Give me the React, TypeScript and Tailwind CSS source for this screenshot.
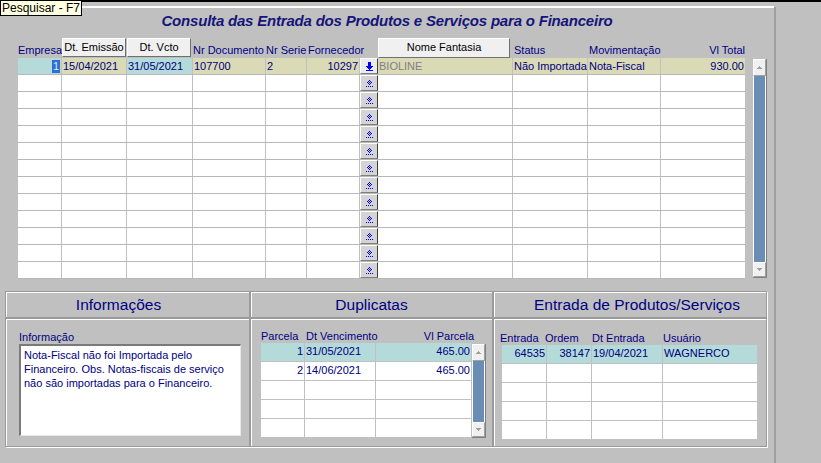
import React from "react";

const CYAN = "bg-[#b4dada]";
const BEIGE = "bg-[#dadab6]";
const TXT = "text-[#000080]";

type Col = { w: string; right?: boolean; btn?: boolean; bg?: string; val?: string; gray?: boolean };

const mainCols: Col[] = [
  { w: "w-[44px]", right: true, bg: CYAN, val: "1" },
  { w: "w-[65px]", bg: BEIGE, val: "15/04/2021" },
  { w: "w-[66px]", bg: CYAN, val: "31/05/2021" },
  { w: "w-[73px]", bg: BEIGE, val: "107700" },
  { w: "w-[41px]", bg: BEIGE, val: "2" },
  { w: "w-[53px]", right: true, bg: BEIGE, val: "10297" },
  { w: "w-[18px]", btn: true },
  { w: "w-[135px]", bg: BEIGE, val: "BIOLINE", gray: true },
  { w: "w-[75px]", bg: BEIGE, val: "Não Importada" },
  { w: "w-[73px]", bg: BEIGE, val: "Nota-Fiscal" },
  { w: "w-[84px]", right: true, bg: BEIGE, val: "930.00" },
];

function DiamondIcon() {
  const dots = [
    [3, 0], [2, 1], [4, 1], [1, 2], [3, 2], [5, 2], [2, 3], [4, 3], [3, 4],
    [0, 6], [2, 6], [4, 6], [6, 6],
  ];
  return (
    <svg width="7" height="7" viewBox="0 0 7 7" shapeRendering="crispEdges">
      {dots.map(([x, y], i) => (
        <rect key={i} x={x} y={y} width="1" height="1" fill="#0000ff" />
      ))}
    </svg>
  );
}

function DownArrowIcon() {
  return (
    <svg width="9" height="9" viewBox="0 0 9 9" shapeRendering="crispEdges">
      <rect x="3" y="0" width="3" height="4" fill="#0000ff" />
      <polygon points="0.5,4 8.5,4 4.5,8" fill="#0000ff" />
      <rect x="1" y="8" width="7" height="1" fill="#0000ff" />
    </svg>
  );
}

function ArrowTri({ up }: { up?: boolean }) {
  return (
    <svg width="5" height="3" viewBox="0 0 5 3" shapeRendering="crispEdges">
      <polygon points={up ? "0,3 5,3 2.5,0" : "0,0 5,0 2.5,3"} fill="#a0a0a0" />
    </svg>
  );
}

function ScrollBar({ h }: { h: string }) {
  return (
    <div className={`${h} w-[14px] flex flex-col border-r border-b border-[#808080]`}>
      <div className="h-[17px] bg-[#f0f0f0] border-t border-l border-white border-r border-b border-r-[#a0a0a0] border-b-[#a0a0a0] flex items-center justify-center">
        <ArrowTri up />
      </div>
      <div className="flex-1 bg-[#6a8db5] border-l border-r border-white" />
      <div className="h-[15px] bg-[#f0f0f0] border-t border-l border-white border-r border-b border-r-[#a0a0a0] border-b-[#a0a0a0] flex items-center justify-center">
        <ArrowTri />
      </div>
    </div>
  );
}

function HeadButton({ w, label }: { w: string; label: string }) {
  return (
    <div
      className={`${w} h-[19px] bg-[#f0f0f0] border-t border-l border-white border-r border-b border-r-[#707070] border-b-[#707070] flex items-start justify-center pt-[2px] text-black text-[11px] leading-[13px]`}
    >
      {label}
    </div>
  );
}

const etched = "border border-[#9a9a9a] shadow-[inset_1px_1px_0_#ffffff,1px_1px_0_#ffffff]";

function GroupBox({
  w,
  title,
  titleCls,
  children,
}: {
  w: string;
  title: string;
  titleCls: string;
  children: React.ReactNode;
}) {
  return (
    <div className={`${w} flex flex-col`}>
      <div className={`h-[27px] ${etched} flex items-center justify-center ${titleCls}`}>
        <span className={`text-[15.5px] ${TXT} leading-[18px]`}>{title}</span>
      </div>
      <div className={`h-[129px] ${etched}`}>{children}</div>
    </div>
  );
}

const dupCols = [
  { w: "w-[44px]", right: true },
  { w: "w-[71px]" },
  { w: "w-[95px]", right: true },
];
const dupRows = [
  ["1", "31/05/2021", "465.00"],
  ["2", "14/06/2021", "465.00"],
  ["", "", ""],
  ["", "", ""],
  ["", "", ""],
];

const entCols = [
  { w: "w-[45px]", right: true },
  { w: "w-[45px]", right: true },
  { w: "w-[71px]" },
  { w: "w-[94px]" },
];
const entRows = [
  ["64535", "38147", "19/04/2021", "WAGNERCO"],
  ["", "", "", ""],
  ["", "", "", ""],
  ["", "", "", ""],
  ["", "", "", ""],
];

function SmallGrid({
  cols,
  rows,
}: {
  cols: { w: string; right?: boolean }[];
  rows: string[][];
}) {
  return (
    <div className="flex flex-col">
      {rows.map((r, ri) => (
        <div key={ri} className="flex h-[19px] border-b border-[#c0c0c0]">
          {cols.map((c, ci) => (
            <div
              key={ci}
              className={`${c.w} h-full ${ri === 0 ? CYAN : "bg-white"} ${
                ci < cols.length - 1 ? "border-r border-[#c0c0c0]" : ""
              } flex items-start ${c.right ? "justify-end pr-[1px]" : "pl-[1px]"} pt-[2px] text-[11px] leading-[13px] ${TXT} whitespace-nowrap`}
            >
              {r[ci]}
            </div>
          ))}
        </div>
      ))}
    </div>
  );
}

export default function App() {
  return (
    <div
      className="relative w-[821px] h-[463px] bg-[#c0c0c0] overflow-hidden"
      style={{ fontFamily: '"Liberation Sans", Arial, sans-serif' }}
    >
      <div className="h-[2px] bg-black" />
      <div className="flex h-[461px]">
        <div className="w-[774px] mt-[4px] border-t-2 border-white flex flex-col">
          {/* Title */}
          <div className="h-[26px] flex items-center justify-center">
            <span className="text-[15px] font-bold italic tracking-[-0.2px] text-[#15157a] leading-[18px]">
              Consulta das Entrada dos Produtos e Serviços para o Financeiro
            </span>
          </div>

          {/* Header row */}
          <div className="mt-[4px] h-[20px] ml-[18px] flex items-start">
            <div className="w-[44px] h-full flex items-end pb-[1px]">
              <span className={`text-[11px] leading-[13px] ${TXT}`}>Empresa</span>
            </div>
            <div className="w-[65px] h-full">
              <HeadButton w="w-[64px]" label="Dt. Emissão" />
            </div>
            <div className="w-[66px] h-full">
              <HeadButton w="w-[64px]" label="Dt. Vcto" />
            </div>
            <div className="w-[73px] h-full flex items-end pb-[1px]">
              <span className={`text-[11px] leading-[13px] ${TXT} whitespace-nowrap`}>Nr Documento</span>
            </div>
            <div className="w-[41px] h-full flex items-end pb-[1px]">
              <span className={`text-[11px] leading-[13px] ${TXT} whitespace-nowrap`}>Nr Serie</span>
            </div>
            <div className="w-[53px] h-full flex items-end pb-[1px] pl-[1px]">
              <span className={`text-[11px] leading-[13px] ${TXT} whitespace-nowrap`}>Fornecedor</span>
            </div>
            <div className="w-[18px] h-full" />
            <div className="w-[135px] h-full">
              <div className="w-[132px] h-[20px] bg-[#f0f0f0] border-t border-l border-white border-r border-b border-r-[#707070] border-b-[#707070] flex items-start justify-center pt-[2px] text-black text-[11px] leading-[13px]">
                Nome Fantasia
              </div>
            </div>
            <div className="w-[75px] h-full flex items-end pb-[1px] pl-[1px]">
              <span className={`text-[11px] leading-[13px] ${TXT}`}>Status</span>
            </div>
            <div className="w-[73px] h-full flex items-end pb-[1px] pl-[1px]">
              <span className={`text-[11px] leading-[13px] ${TXT} whitespace-nowrap`}>Movimentação</span>
            </div>
            <div className="w-[84px] h-full flex items-end justify-end pb-[1px]">
              <span className={`text-[11px] leading-[13px] ${TXT} whitespace-nowrap`}>Vl Total</span>
            </div>
          </div>

          {/* Main grid */}
          <div className="flex ml-[18px]">
            <div className="flex flex-col w-[727px]">
              {Array.from({ length: 13 }).map((_, r) => (
                <div key={r} className="flex h-[17px] border-b border-[#b8b8b8]">
                  {mainCols.map((c, i) => {
                    if (c.btn) {
                      return (
                        <div key={i} className={`${c.w} h-full`}>
                          <div
                            className={`w-full h-full ${
                              r === 0 ? "bg-[#ececec]" : "bg-[#d4d4d4]"
                            } border-t border-l border-white border-r border-b border-r-[#404040] border-b-[#808080] flex items-center justify-center`}
                          >
                            {r === 0 ? <DownArrowIcon /> : <DiamondIcon />}
                          </div>
                        </div>
                      );
                    }
                    const bg = r === 0 ? c.bg : "bg-white";
                    return (
                      <div
                        key={i}
                        className={`${c.w} h-full ${bg} ${
                          i < mainCols.length - 1 ? "border-r border-[#c0c0c0]" : ""
                        } flex items-center ${c.right ? "justify-end pr-[1px]" : "pl-[1px]"} text-[11px] leading-[13px] ${
                          c.gray ? "text-[#808080]" : TXT
                        } whitespace-nowrap overflow-hidden`}
                      >
                        {r === 0 ? (
                          i === 0 ? (
                            <span className="bg-[#2f6fd6] text-[#dfe9ff] px-[1px]">1</span>
                          ) : (
                            c.val
                          )
                        ) : null}
                      </div>
                    );
                  })}
                </div>
              ))}
            </div>
            <div className="ml-[8px] mt-[1px]">
              <ScrollBar h="h-[219px]" />
            </div>
          </div>

          {/* Bottom group boxes */}
          <div className="mt-[12px] ml-[5px] flex">
            <GroupBox w="w-[245px]" title="Informações" titleCls="pr-[18px]">
              <div className="pl-[13px] pt-[11px]">
                <div className={`text-[11px] leading-[14px] ${TXT}`}>Informação</div>
                <div className="w-[222px] h-[92px] bg-white border-t-2 border-l-2 border-t-[#7a7a7a] border-l-[#7a7a7a] border-r border-b border-r-[#e8e8e8] border-b-[#e8e8e8] px-[3px] pt-[2px]">
                  <p className={`text-[11px] leading-[14px] ${TXT}`}>
                    Nota-Fiscal não foi Importada pelo
                    <br />
                    Financeiro. Obs. Notas-fiscais de serviço
                    <br />
                    não são importadas para o Financeiro.
                  </p>
                </div>
              </div>
            </GroupBox>

            <GroupBox w="w-[243px]" title="Duplicatas" titleCls="">
              <div className="pl-[10px] pt-[11px]">
                <div className={`flex h-[13px] text-[11px] leading-[13px] ${TXT} whitespace-nowrap`}>
                  <div className="w-[45px]">Parcela</div>
                  <div className="w-[71px]">Dt Vencimento</div>
                  <div className="w-[97px] text-right">Vl Parcela</div>
                </div>
                <div className="flex">
                  <SmallGrid cols={dupCols} rows={dupRows} />
                  <div className="ml-[1px] mt-[1px]">
                    <ScrollBar h="h-[94px]" />
                  </div>
                </div>
              </div>
            </GroupBox>

            <GroupBox w="w-[274px]" title="Entrada de Produtos/Serviços" titleCls="pl-[14px]">
              <div className="pl-[6px] pt-[13px]">
                <div className={`flex h-[13px] text-[11px] leading-[13px] ${TXT} whitespace-nowrap`}>
                  <div className="w-[45px]">Entrada</div>
                  <div className="w-[47px]">Ordem</div>
                  <div className="w-[71px]">Dt Entrada</div>
                  <div className="w-[80px]">Usuário</div>
                </div>
                <div className="pl-[2px]">
                  <SmallGrid cols={entCols} rows={entRows} />
                </div>
              </div>
            </GroupBox>
          </div>
        </div>
        <div className="w-[2px] mt-[5px] bg-[#a0a0a0]" />
      </div>

      {/* Tooltip */}
      <div className="absolute left-0 top-0 h-[16px] px-[1px] bg-[#ffffe1] border border-black flex items-center">
        <span className="text-[12px] leading-[14px] text-black whitespace-nowrap">Pesquisar - F7</span>
      </div>
    </div>
  );
}
